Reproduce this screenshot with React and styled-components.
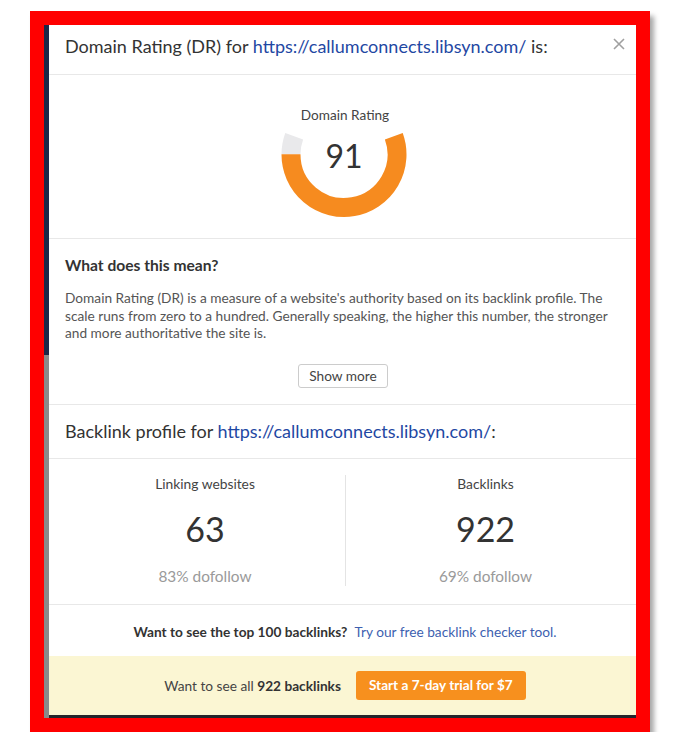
import styled, { createGlobalStyle } from "styled-components";

const GlobalStyle = createGlobalStyle`
  html, body {
    margin: 0;
    padding: 0;
    background: #fff;
  }
  body {
    font-family: Lato, "Open Sans", sans-serif;
    color: #333;
  }
`;

const Page = styled.div`
  padding: 11px 0 0 30px;
`;

const Frame = styled.div`
  width: 592px;
  height: 693px;
  border: 14px solid #ff0000;
  display: flex;
  align-items: flex-start;
  overflow: hidden;
  background: #24242a;
  box-shadow: 4px 5px 5px rgba(0, 0, 0, 0.35);
`;

const Backdrop = styled.div`
  flex: 0 0 5px;
  align-self: stretch;
  background: linear-gradient(#1b2848 0 330px, #8a8a8a 330px);
`;

const Modal = styled.div`
  flex: 0 0 592px;
  background: #fff;
  display: flex;
  flex-direction: column;
`;

const Header = styled.div`
  position: relative;
  padding: 10px 40px 17px 16px;
  border-bottom: 1px solid #e8e8e8;
  font-size: 18px;
  line-height: 22px;
  color: #333;
`;

const Link = styled.a`
  color: ${(p) => (p.$soft ? "#3d5fb0" : "#1f48a3")};
  text-decoration: none;
`;

const Close = styled.button`
  position: absolute;
  top: 12px;
  right: 15px;
  width: 14px;
  height: 14px;
  padding: 0;
  border: none;
  background: none;
  cursor: pointer;
  display: flex;
  align-items: center;
  justify-content: center;
`;

const GaugeSection = styled.div`
  padding: 32px 16px 20px;
  border-bottom: 1px solid #e8e8e8;
  display: flex;
  flex-direction: column;
  align-items: center;
`;

const GaugeLabel = styled.div`
  font-size: 13.6px;
  line-height: 16px;
  color: #444;
`;

const Gauge = styled.div`
  position: relative;
  margin-top: 9px;
  width: 126px;
  height: 86px;
  margin-left: -2px;
`;

const GaugeValue = styled.div`
  position: absolute;
  top: 8px;
  left: 0;
  right: 0;
  text-align: center;
  font-size: 32px;
  line-height: 32px;
  font-weight: 400;
  color: #333;
`;

const InfoSection = styled.div`
  padding: 16px 16px 16px;
  border-bottom: 1px solid #e8e8e8;
  display: flex;
  flex-direction: column;
`;

const InfoTitle = styled.h3`
  margin: 0;
  font-size: 15.6px;
  line-height: 20px;
  font-weight: 700;
  color: #333;
`;

const InfoText = styled.p`
  margin: 14px 0 0;
  font-size: 13.7px;
  line-height: 17.5px;
  color: #555;
`;

const ShowMore = styled.button`
  align-self: center;
  margin: 22px 0 0 -4px;
  height: 24px;
  padding: 0 10px;
  font-family: inherit;
  font-size: 13.7px;
  color: #444;
  background: #fff;
  border: 1px solid #ccc;
  border-radius: 3px;
  cursor: pointer;
`;

const SectionTitle = styled.div`
  padding: 15px 16px 16px;
  border-bottom: 1px solid #e8e8e8;
  font-size: 18px;
  line-height: 22px;
  color: #333;
`;

const Stats = styled.div`
  display: grid;
  grid-template-columns: 1fr 1fr;
  padding: 16px 16px 18px;
  border-bottom: 1px solid #e8e8e8;
`;

const Stat = styled.div`
  display: flex;
  flex-direction: column;
  align-items: center;
  border-left: ${(p) => (p.$divided ? "1px solid #e4e4e4" : "none")};
  padding-bottom: 1px;
`;

const StatLabel = styled.div`
  font-size: 13.8px;
  line-height: 18px;
  color: #444;
`;

const StatValue = styled.div`
  margin-top: 16px;
  font-size: 34px;
  line-height: 40px;
  color: #333;
`;

const StatNote = styled.div`
  margin-top: 18px;
  font-size: 15.4px;
  line-height: 18px;
  color: #9a9a9a;
`;

const Promo = styled.div`
  padding: 18px 16px 15px;
  text-align: center;
  font-size: 13.7px;
  line-height: 18px;
  color: #333;

  strong {
    font-weight: 700;
    margin-right: 7px;
  }
`;

const TrialBar = styled.div`
  height: 59px;
  background: #fbf6d3;
  display: flex;
  align-items: center;
  justify-content: center;
  gap: 15px;
  font-size: 13.7px;
  color: #444;

  b {
    font-weight: 700;
    color: #333;
  }
`;

const TrialButton = styled.button`
  height: 29px;
  padding: 0 13px;
  border: none;
  border-radius: 3px;
  background: #f7901e;
  color: #fff;
  font-family: inherit;
  font-size: 13.6px;
  font-weight: 700;
  cursor: pointer;
`;

const URL = "https://callumconnects.libsyn.com/";

// arc helpers for the donut gauge
const CX = 63;
const CY = 22.5;
const R = 53;
const pt = (deg) => {
  const a = (deg * Math.PI) / 180;
  return `${(CX + R * Math.cos(a)).toFixed(2)} ${(CY + R * Math.sin(a)).toFixed(2)}`;
};

const DonutGauge = ({ value }) => {
  const start = 200; // left end, 20deg above horizontal
  const span = 220;
  const split = start - span * (1 - value / 100);
  const end = start - span;
  return (
    <Gauge>
      <svg width="126" height="86" viewBox="0 0 126 86">
        <path
          d={`M ${pt(start)} A ${R} ${R} 0 0 0 ${pt(split)}`}
          fill="none"
          stroke="#e9e9eb"
          strokeWidth="19"
        />
        <path
          d={`M ${pt(split)} A ${R} ${R} 0 1 0 ${pt(end)}`}
          fill="none"
          stroke="#f68b1f"
          strokeWidth="19"
        />
      </svg>
      <GaugeValue>{value}</GaugeValue>
    </Gauge>
  );
};

const App = () => {
  return (
    <Page>
      <GlobalStyle />
      <Frame>
        <Backdrop />
        <Modal>
          <Header>
            Domain Rating (DR) for <Link href="#">{URL}</Link> is:
            <Close aria-label="Close">
              <svg width="12" height="12" viewBox="0 0 12 12">
                <path d="M1 1 L11 11 M11 1 L1 11" stroke="#a0a0a0" strokeWidth="1.6" />
              </svg>
            </Close>
          </Header>

          <GaugeSection>
            <GaugeLabel>Domain Rating</GaugeLabel>
            <DonutGauge value={91} />
          </GaugeSection>

          <InfoSection>
            <InfoTitle>What does this mean?</InfoTitle>
            <InfoText>
              Domain Rating (DR) is a measure of a website's authority based on its backlink profile. The
              scale runs from zero to a hundred. Generally speaking, the higher this number, the stronger
              and more authoritative the site is.
            </InfoText>
            <ShowMore>Show more</ShowMore>
          </InfoSection>

          <SectionTitle>
            Backlink profile for <Link href="#">{URL}</Link>:
          </SectionTitle>

          <Stats>
            <Stat>
              <StatLabel>Linking websites</StatLabel>
              <StatValue>63</StatValue>
              <StatNote>83% dofollow</StatNote>
            </Stat>
            <Stat $divided>
              <StatLabel>Backlinks</StatLabel>
              <StatValue>922</StatValue>
              <StatNote>69% dofollow</StatNote>
            </Stat>
          </Stats>

          <Promo>
            <strong>Want to see the top 100 backlinks?</strong>
            <Link $soft href="#">Try our free backlink checker tool.</Link>
          </Promo>

          <TrialBar>
            <span>
              Want to see all <b>922 backlinks</b>
            </span>
            <TrialButton>Start a 7-day trial for $7</TrialButton>
          </TrialBar>
        </Modal>
      </Frame>
    </Page>
  );
};

export default App;
